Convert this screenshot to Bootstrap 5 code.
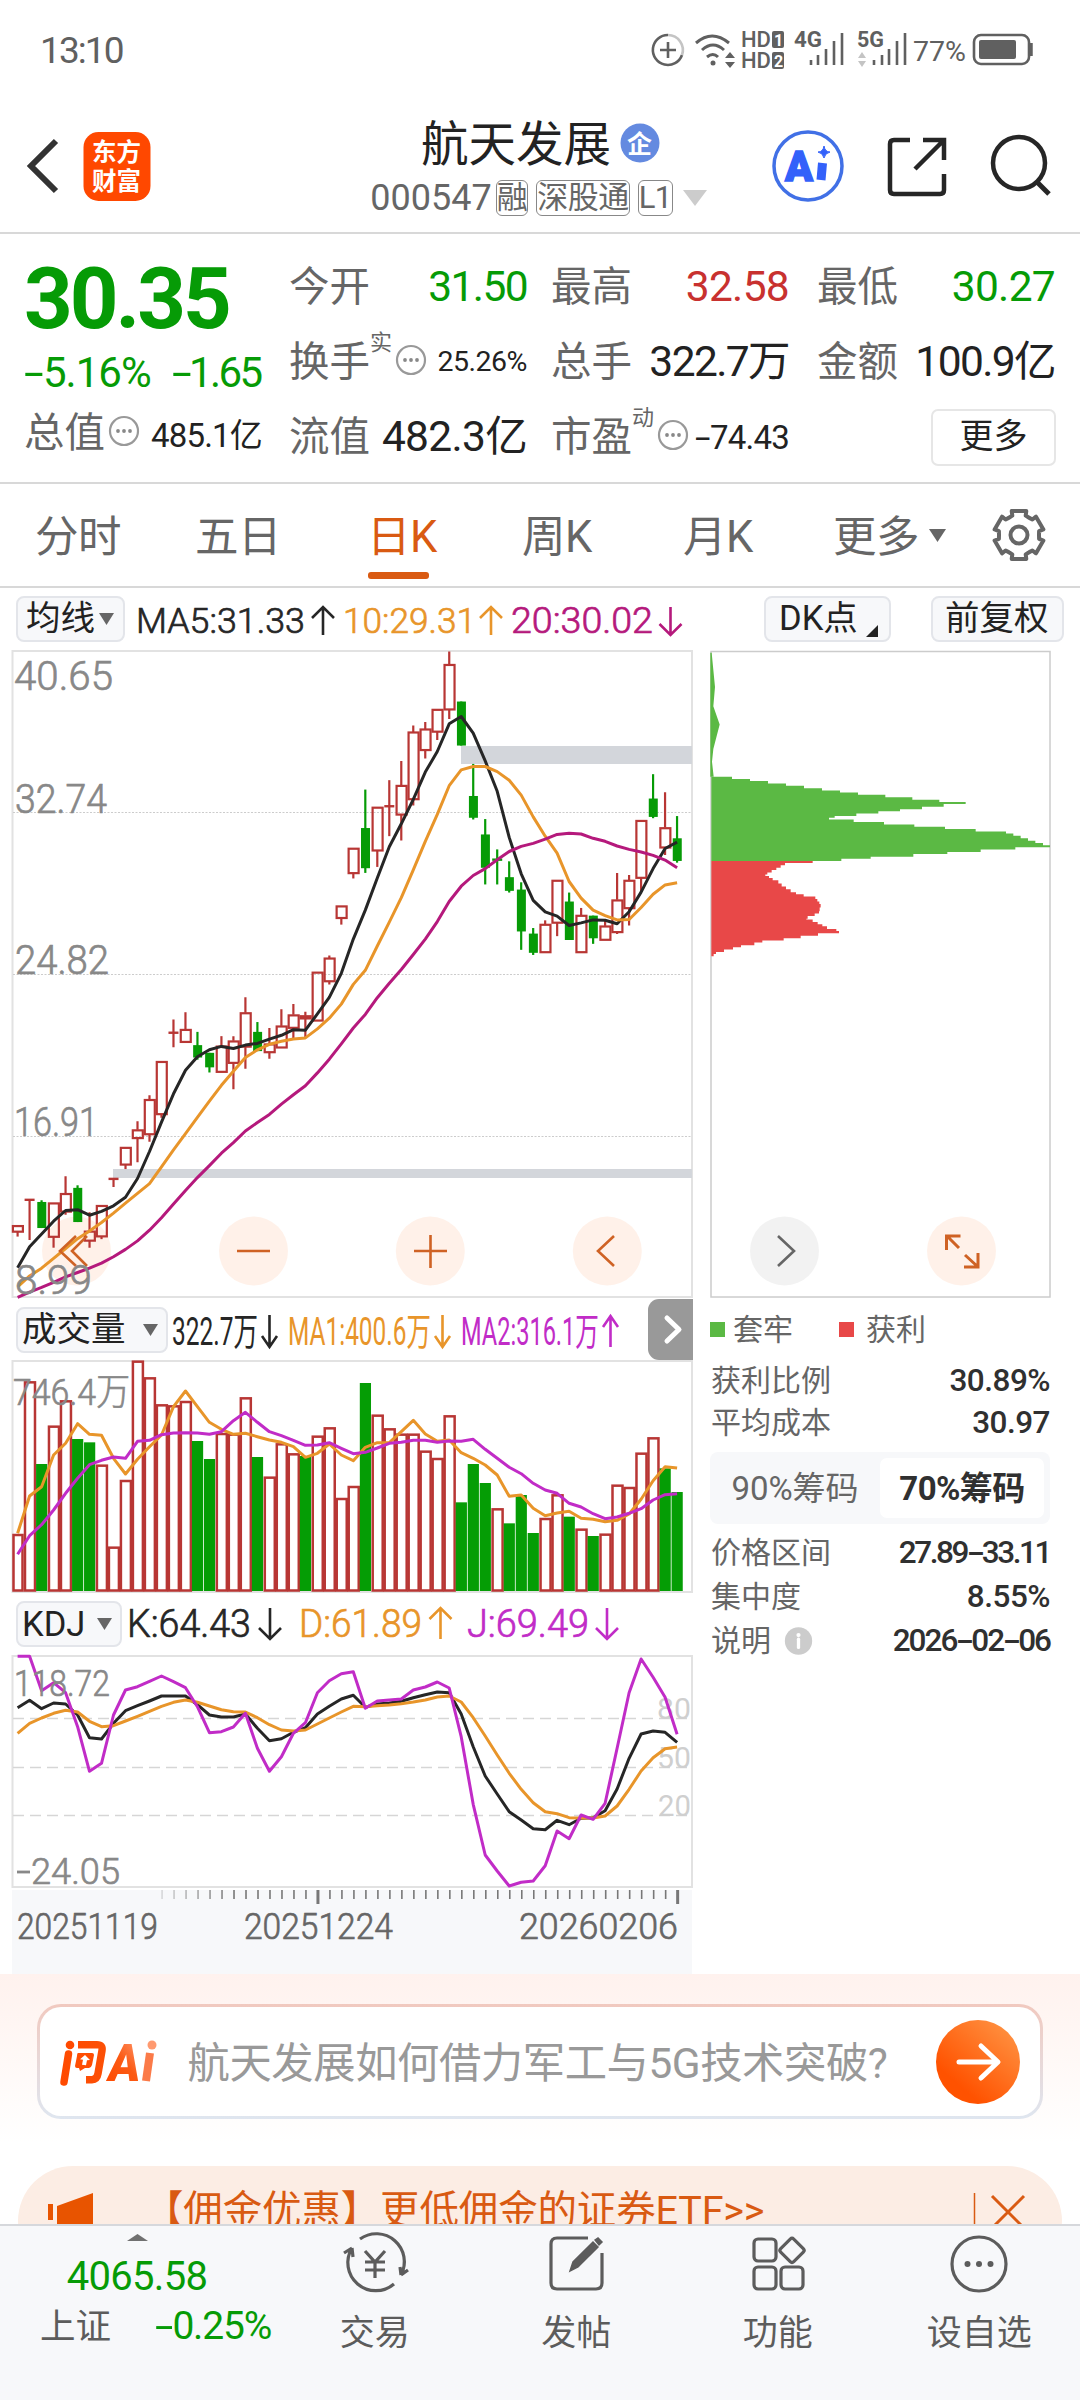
<!DOCTYPE html>
<html lang="zh-CN">
<head>
<meta charset="utf-8">
<meta name="viewport" content="width=device-width, initial-scale=1">
<title>航天发展 000547</title>
<link href="https://cdn.jsdelivr.net/npm/bootstrap@5.3.0/dist/css/bootstrap.min.css" rel="stylesheet">
<script src="https://cdn.jsdelivr.net/npm/bootstrap@5.3.0/dist/js/bootstrap.bundle.min.js"></script>
<style>
:root{--up:#c8312f;--down:#069b06;--ink:#222;--sub:#666;--brand:#d95a12;--panel:#f7f8fa;--rule:#d8d8d8}
html,body{width:1080px;height:2400px;overflow:hidden;margin:0;background:#fff}
body,svg text{font-family:Roboto,"Noto Sans CJK SC",sans-serif}
body{color:var(--ink);line-height:1}
svg{display:block;flex:none;overflow:visible}
.hy{display:inline-block;transform:scaleX(1.7);transform-origin:0 50%;margin-right:.2em}
.status{height:100px;padding:0 46px 0 40px;color:#606060}
.clock{font-size:37px;letter-spacing:-1.9px}
.topbar{height:134px;border-bottom:2px solid var(--rule)}
.title-col{width:338px}
.stock-name{font-size:47.5px;line-height:50px}
.code-line{font-size:36px;color:var(--sub);margin:10px 0 0 -5px}
.code-line .num{letter-spacing:0}
.tagbox{border:1.5px solid #888;border-radius:6px;height:36px;font-size:31px;line-height:33px;letter-spacing:-.5px}
.quote{height:250px;border-bottom:2px solid var(--rule);padding:0 23px 0 24px}
.price{font-size:85px;font-weight:700;letter-spacing:-3px;color:var(--down);height:80px;line-height:82px}
.delta{font-size:42px;letter-spacing:-1px;color:var(--down);height:62px;line-height:62px}
.delta .amt{letter-spacing:-2.6px;margin-left:21px}
.qcol{width:238px}
.qrow{height:75px;font-size:42.5px;white-space:nowrap}
.qrow .lb{font-size:40.5px;color:var(--sub)}
.qrow .v{letter-spacing:-.7px;margin-left:auto}
.qrow .tight{letter-spacing:-1.6px}
.qrow .v28{font-size:28.5px;letter-spacing:-.5px}
.qrow .v33{font-size:33px;letter-spacing:-.8px}
.sup{font-size:22px;color:var(--sub);align-self:flex-start;margin-top:7px}
.upshift{margin-top:-6px}
.morebtn{width:125px;height:57px;margin-right:-1px;border:2px solid #e6e6e6;border-radius:7px;font-size:34px;line-height:50px;text-align:center}
.tabs-k{height:104px;border-bottom:2px solid var(--rule);font-size:43.5px;color:var(--sub);padding-left:35px}
.tabs-k .tab{height:102px;line-height:107px;position:relative;letter-spacing:-.6px;white-space:nowrap}
.tabs-k .on{color:var(--brand)}
.tabs-k .on::after{content:"";position:absolute;left:1px;bottom:7px;width:61px;height:7px;border-radius:3px;background:var(--brand)}
.chipbtn{height:46px;border:2px solid #e3e5ea;border-radius:8px;background:var(--panel);font-size:34.5px;white-space:nowrap;padding-left:8px}
.ind{height:63px;padding:0 16px 2px;flex:none}
.mainrow{height:1323px}
.left{width:693px;padding-left:12px}
.right{width:340px;margin-left:17px}
.sidebtn{width:45px;height:61px;background:#999;border-radius:11px 0 0 11px}
.info{font-size:30px;color:var(--sub);height:44px;white-space:nowrap}
.info>span:first-child:not(.sq){padding-left:1px}
.info .val{color:#303030;font-weight:500;font-size:31.5px;letter-spacing:-.5px}
.info .v-range{letter-spacing:-2.4px}
.info .v-date{letter-spacing:-2px}
.sq{width:15px;height:15px}
.seg{height:72px;margin:7px 0;border-radius:8px;background:var(--panel);padding:6px;font-size:33px;color:var(--sub);letter-spacing:-.1px}
.seg .off{padding-right:6px}
.seg .act{width:164px;background:#fff;border-radius:7px;color:#303030;font-weight:700;letter-spacing:-.6px}
.axisbox{background:var(--panel);height:84px;width:680px;margin-top:2px}
.askband{height:192px;background:linear-gradient(#fff2ee,#fff 88%);padding:30px 37px 0}
.askcard{height:115px;border:3px solid transparent;border-radius:24px;background:linear-gradient(#fff,#fff) padding-box,linear-gradient(#f1c9bf,#dfe6f0) border-box;padding:0 20px}
.asktext{font-size:42.3px;color:#999;letter-spacing:-.4px;white-space:nowrap;padding-top:5px;margin-left:-5px}
.promo{height:110px;margin:0 18px;border-radius:55px;background:#fcede4;color:var(--brand);padding:0 36px 20px 30px;font-size:39.5px}
.promo .msg{white-space:nowrap;letter-spacing:-.15px;margin-left:50px}
.dock{height:176px;background:var(--panel);border-top:2px solid #d6d8dc;color:#5c5c5c}
.dock .item{width:201.5px;padding-top:6px;font-size:35px}
.dock .item span{margin-top:22px}
.idx{width:274px;color:var(--down);padding-top:8px}
.idx .pt{font-size:40px;letter-spacing:-.7px}
.idx .pc{font-size:39px;letter-spacing:-1.2px;margin:-2px 3px 0 0}
.idx .nm{font-size:35.5px;color:#5c5c5c}
</style>
</head>
<body>
<div class="status d-flex align-items-center justify-content-between">
  <span class="clock">13:10</span>
  <svg width="386" height="44" viewBox="648 28 386 44" fill="none" stroke="#606060" stroke-width="2.6">
    <path d="M668 35a15 15 0 1 0 14 20"/><path d="M668 35a15 15 0 0 1 14 20" stroke="#c4c4c4"/>
    <path d="M668 42v16M660 50h16"/>
    <path d="M696 43q16-14 33 0M702 50q11-10 22 0M707 57q6-5 11 0" stroke-width="3"/>
    <circle cx="713" cy="63" r="2.5" fill="#606060" stroke="none"/>
    <path d="M730 52l5 6h-10zM730 68l5-6h-10z" fill="#606060" stroke="none"/>
    <rect x="772" y="31" width="12" height="17" rx="2" fill="#606060" stroke="none"/>
    <rect x="772" y="52" width="12" height="17" rx="2" fill="#606060" stroke="none"/>
    <g fill="#606060" stroke="none" font-size="22">
      <text x="741" y="47" font-weight="500" textLength="30" lengthAdjust="spacingAndGlyphs">HD</text>
      <text x="741" y="68" font-weight="500" textLength="30" lengthAdjust="spacingAndGlyphs">HD</text>
      <text x="794" y="47" font-weight="700" textLength="28" lengthAdjust="spacingAndGlyphs">4G</text>
      <text x="857" y="47" font-weight="700" textLength="27" lengthAdjust="spacingAndGlyphs">5G</text>
      <text x="774" y="46" fill="#fff" font-size="16" font-weight="700">1</text>
      <text x="774" y="67" fill="#fff" font-size="16" font-weight="700">2</text>
      <text x="913" y="61" font-size="28" textLength="53" lengthAdjust="spacingAndGlyphs">77%</text>
    </g>
    <path d="M811 60v5M818 55v10M826 49v16M834 41v24M842 33v32M874 60v5M882 55v10M889 49v16M897 41v24M905 33v32"/>
    <path d="M862 52l4 6h-8zM862 67l4-6h-8z" fill="#c4c4c4" stroke="none"/>
    <rect x="974" y="35" width="55" height="29" rx="7"/><rect x="979" y="40" width="37" height="19" rx="2" fill="#606060" stroke="none"/>
    <path d="M1031 43v13" stroke-width="3.5"/>
  </svg>
</div>

<header class="topbar d-flex align-items-start">
  <svg width="371" height="132" viewBox="0 100 371 132">
    <path d="M56 141L31 166l25 25" fill="none" stroke="#333" stroke-width="6"/>
    <rect x="83.500" y="132" width="67" height="69" rx="15" fill="#ff4800"/>
    <g fill="#fff" font-weight="700" font-size="24.5"><text x="92" y="161">东方</text><text x="92" y="190">财富</text></g>
  </svg>
  <div class="title-col d-flex flex-column align-items-center">
    <div class="d-flex align-items-center mt-3 pt-1">
      <span class="stock-name">航天发展</span>
      <svg class="ms-2" width="40" height="42" viewBox="-1 0 40 42"><circle cx="20" cy="19" r="19.5" fill="#648ae0"/><text x="7" y="28.500" font-size="25" font-weight="700" fill="#fff">企</text></svg>
    </div>
    <div class="code-line d-flex align-items-center">
      <span class="num">000547</span><span class="tagbox ms-1 px-0">融</span><span class="tagbox ms-2">深股通</span><span class="tagbox ms-2 px-0">L1</span>
      <svg class="ms-2" width="24" height="16" viewBox="-2 0 24 16"><path d="M0 0h24l-12 16z" fill="#ccc"/></svg>
    </div>
  </div>
  <svg width="371" height="132" viewBox="709 100 371 132" fill="none" stroke="#262626" stroke-width="4.5">
    <circle cx="808" cy="166" r="34" stroke="#4170e6" stroke-width="3.500"/>
    <text x="785" y="181" font-size="43" font-weight="900" fill="#3361fa" stroke="#3361fa" stroke-width="1.500" textLength="28" lengthAdjust="spacingAndGlyphs">A</text>
    <path d="M822.500 163l-1.500 17" stroke="#3361fa" stroke-width="9"/><path d="M824 146q1 6 6 6-5 1-6 6-1-5-6-6 5 0 6-6z" fill="#3361fa" stroke="#3361fa" stroke-width="1"/>
    <path d="M910 140h-16q-4 0-4 4v46q0 4 4 4h46q4 0 4-4v-16M923 140h21v20M944 140l-29 29"/>
    <circle cx="1019" cy="163" r="26"/><path d="M1037 182l12 12" stroke-width="5"/>
  </svg>
</header>

<section class="quote d-flex">
  <div style="width:265px" class="pt-4">
    <div class="price">30.35</div>
    <div class="delta d-flex pt-1 mb-2"><span><span class="hy">-</span>5.16%</span><span class="amt"><span class="hy">-</span>1.65</span></div>
    <div class="qrow qcol d-flex align-items-center" style="height:51px"><span class="lb">总值</span><svg class="dots ms-1 upshift" width="30" height="30"></svg><span class="v v33 pt-1">485.1亿</span></div>
  </div>
  <div class="pt-3 me-4 qcol">
    <div class="qrow d-flex align-items-center"><span class="lb">今开</span><span class="v tight" style="color:var(--down)">31.50</span></div>
    <div class="qrow d-flex align-items-center"><span class="lb">换手</span><span class="sup">实</span><svg class="dots ms-1 upshift" width="30" height="30"></svg><span class="v v28">25.26%</span></div>
    <div class="qrow d-flex align-items-center"><span class="lb">流值</span><span class="v">482.3亿</span></div>
  </div>
  <div class="pt-3 me-4 qcol">
    <div class="qrow d-flex align-items-center"><span class="lb">最高</span><span class="v" style="color:var(--up)">32.58</span></div>
    <div class="qrow d-flex align-items-center"><span class="lb">总手</span><span class="v tight">322.7万</span></div>
    <div class="qrow d-flex align-items-center"><span class="lb">市盈</span><span class="sup">动</span><svg class="dots ms-1 upshift" width="30" height="30"></svg><span class="v v33"><span class="hy">-</span>74.43</span></div>
  </div>
  <div class="pt-3 qcol ms-1">
    <div class="qrow d-flex align-items-center"><span class="lb">最低</span><span class="v" style="color:var(--down)">30.27</span></div>
    <div class="qrow d-flex align-items-center"><span class="lb">金额</span><span class="v tight">100.9亿</span></div>
    <div class="qrow d-flex align-items-center justify-content-end"><span class="morebtn">更多</span></div>
  </div>
</section>

<nav class="tabs-k d-flex">
  <span class="tab" style="width:160px">分时</span><span class="tab" style="width:172px">五日</span><span class="tab on" style="width:155px">日K</span><span class="tab" style="width:161px">周K</span><span class="tab" style="width:150px">月K</span><span class="tab">更多</span>
  <svg width="135" height="102" viewBox="919 484 135 102" fill="none" stroke="#666" stroke-width="4"><path d="M929 529h17l-8.500 13z" fill="#666" stroke="none"/><path id="gear"/><circle cx="1019" cy="535" r="8.500"/></svg>
</nav>

<div class="ind d-flex align-items-center justify-content-between">
  <div class="d-flex align-items-center">
    <div class="chipbtn d-flex align-items-center" style="width:109px">均线<svg class="ms-1" width="15" height="12"><path d="M0 0h15l-7.500 12z" fill="#666"/></svg></div>
    <svg id="maText" width="570" height="46" viewBox="125 596 570 46"></svg>
  </div>
  <div class="d-flex">
    <div class="chipbtn d-flex align-items-center me-4" style="width:127px;padding-left:13px">DK点<svg class="ms-2 mt-4" width="12" height="12"><path d="M12 0v12H0z" fill="#222"/></svg></div>
    <div class="chipbtn d-flex align-items-center ms-3" style="width:133px;padding-left:12px">前复权</div>
  </div>
</div>

<div class="mainrow d-flex">
  <div class="left">
    <svg id="kChart" width="681" height="648" viewBox="12 651 681 648"></svg>
    <div class="d-flex align-items-center justify-content-between" style="height:61px">
      <div class="d-flex align-items-center">
        <div class="chipbtn d-flex align-items-center ms-1 pe-2 justify-content-between" style="width:152px;padding-left:4px">成交量<svg class="ms-1" width="15" height="12"><path d="M0 0h15l-7.500 12z" fill="#666"/></svg></div>
        <svg id="volText" width="460" height="46" viewBox="168 1306 460 46"></svg>
      </div>
      <div class="sidebtn"><svg width="45" height="61" fill="none" stroke="#fff" stroke-width="5" stroke-linecap="round" stroke-linejoin="round"><path d="M19 19l12 11.500L19 42"/></svg></div>
    </div>
    <svg id="vChart" width="681" height="233" viewBox="12 1360 681 233"></svg>
    <div class="d-flex align-items-center" style="height:62px">
      <div class="chipbtn d-flex align-items-center ms-1 pe-2 justify-content-between" style="width:106px;padding-left:4px">KDJ<svg width="15" height="12"><path d="M0 0h15l-7.500 12z" fill="#666"/></svg></div>
      <svg id="kdjText" width="520" height="46" viewBox="122 1602 520 46"></svg>
    </div>
    <svg id="jChart" width="681" height="233" viewBox="12 1655 681 233"></svg>
    <div class="axisbox"><svg id="axis" width="680" height="84" viewBox="12 1890 680 84"></svg></div>
  </div>
  <div class="right">
    <svg id="chip" width="341" height="648" viewBox="710 651 341 648"></svg>
    <div class="d-flex align-items-center info" style="height:61px"><span class="sq me-2 ms-0" style="background:#5bb944"></span><span style="width:106px">套牢</span><span class="sq me-2" style="background:#e84848"></span><span class="ps-1">获利</span></div>
    <div class="info d-flex align-items-center justify-content-between" style="height:41px"><span>获利比例</span><span class="val">30.89%</span></div>
    <div class="info d-flex align-items-center justify-content-between"><span>平均成本</span><span class="val">30.97</span></div>
    <div class="seg d-flex"><span class="off flex-fill d-flex align-items-center justify-content-center">90%筹码</span><span class="act d-flex align-items-center justify-content-center">70%筹码</span></div>
    <div class="info d-flex align-items-center justify-content-between"><span>价格区间</span><span class="val v-range">27.89<span class="hy">-</span>33.11</span></div>
    <div class="info d-flex align-items-center justify-content-between"><span>集中度</span><span class="val">8.55%</span></div>
    <div class="info d-flex align-items-center justify-content-between"><span class="d-flex align-items-center">说明<svg class="ms-2 ps-1" width="35" height="30" viewBox="-2 0 34 30"><circle cx="15" cy="15" r="15" fill="#ccc"/><circle cx="15" cy="8.500" r="2.300" fill="#fff"/><path d="M15 13v9" stroke="#fff" stroke-width="3.600" stroke-linecap="round"/></svg></span><span class="val v-date">2026<span class="hy">-</span>02<span class="hy">-</span>06</span></div>
  </div>
</div>

<section class="askband">
  <div class="askcard d-flex align-items-center justify-content-between">
    <svg width="100" height="50" viewBox="60 2036 100 50">
      <defs><linearGradient id="g1" gradientUnits="userSpaceOnUse" x1="60" x2="160" y1="0" y2="0"><stop offset="0" stop-color="#ff4a00"/><stop offset=".6" stop-color="#fb5208"/><stop offset="1" stop-color="#ff9a70"/></linearGradient>
      <linearGradient id="g3" gradientUnits="userSpaceOnUse" x1="-2" x2="34" y1="0" y2="-36"><stop offset="0" stop-color="#ff4a00"/><stop offset=".5" stop-color="#fb5a14"/><stop offset="1" stop-color="#ff9a70"/></linearGradient>
      <linearGradient id="g2" x1="1" y1="0" x2=".3" y2=".8"><stop offset="0" stop-color="#ff9a4a"/><stop offset="1" stop-color="#ff5200"/></linearGradient></defs>
      <g fill="none" stroke="url(#g1)" stroke-width="7.500"><path d="M68.500 2053L64 2081" stroke-linecap="round"/><path d="M78 2043.700h19q6 0 5 6l-4 23q-1 6-6 6h-6"/></g>
      <path d="M78 2052h14q2 0 2 2l-2 10q-1 3-3 3h-4l-5 3-1-3h-2q-2 0-2-2l2-10q0-3 1-3z" fill="#ff4d02"/>
      <path d="M85 2054l5 5-3 .3-1 5-4-.5 1-5-3-.6z" fill="#fff"/>
      <circle cx="70" cy="2044" r="4.300" fill="#ff4a00"/><circle cx="152" cy="2044" r="4.500" fill="#ff9a70"/>
      <text transform="translate(106 2080) skewX(-9)" font-size="52" font-weight="900" fill="url(#g3)" textLength="32" lengthAdjust="spacingAndGlyphs">A</text>
      <path d="M150 2052l-4 28" stroke="#fb7a48" stroke-width="8"/>
    </svg>
    <span class="asktext">航天发展如何借力军工与5G技术突破?</span>
    <svg width="84" height="84" class="ms-3"><circle cx="42" cy="42" r="42" fill="url(#g2)"/><path d="M23 42h38M45 26l17 16-17 16" fill="none" stroke="#fff" stroke-width="5" stroke-linecap="round" stroke-linejoin="round"/></svg>
  </div>
</section>
<div class="promo d-flex align-items-center">
  <svg width="46" height="40" viewBox="48 2191 46 40" fill="#e85400"><path d="M48 2204h5v16h-5zM57 2206l36-13v39H57z"/></svg>
  <span class="msg">【佣金优惠】更低佣金的证券ETF&gt;&gt;</span>
  <svg class="ms-auto" width="54" height="40" viewBox="972 2191 54 40" fill="none" stroke="#d95a12"><path d="M974.500 2193v38" stroke-width="1.500"/><path d="M992 2196l32 32M1024 2196l-32 32" stroke-width="3"/></svg>
</div>

<footer class="dock fixed-bottom d-flex">
  <div class="idx d-flex flex-column align-items-center">
    <svg width="21" height="7"><path d="M0 7L10.500 0 21 7z" fill="#707070"/></svg>
    <span class="pt mt-3">4065.58</span>
    <div class="d-flex align-items-center justify-content-between mt-2 pt-1 w-100 ps-4"><span class="nm ms-3">上证</span><span class="pc"><span class="hy">-</span>0.25%</span></div>
  </div>
  <div class="item d-flex flex-column align-items-center"><svg width="66" height="62" viewBox="342 2232 66 62" fill="none" stroke="#5c5c5c" stroke-width="3.200"><path d="M360 2239a28 28 0 0 1 41 36M401 2275l7-5M401 2275l-1-8M394 2284a28 28 0 0 1-42-36M352 2248l-8 5M352 2248l1 9"/><path d="M365 2251l10 11 10-11M375 2262v16M365 2262h20M365 2270h20"/></svg><span>交易</span></div>
  <div class="item d-flex flex-column align-items-center"><svg width="66" height="62" viewBox="544 2232 66 62" fill="none" stroke="#5c5c5c" stroke-width="3.200"><path d="M589 2238h-31q-6 0-6 6v39q0 6 6 6h39q6 0 6-6v-30"/><path d="M571 2271l3-9 20-20 5 5-20 20zM596 2240l3-2 4 4-3 3z" fill="#5c5c5c" stroke-width="1.500"/></svg><span>发帖</span></div>
  <div class="item d-flex flex-column align-items-center"><svg width="66" height="62" viewBox="745 2232 66 62" fill="none" stroke="#5c5c5c" stroke-width="3.200"><rect x="754" y="2239" width="22" height="22" rx="4"/><rect x="754" y="2267" width="22" height="22" rx="4"/><rect x="781" y="2267" width="22" height="22" rx="4"/><rect x="783" y="2241" width="18.500" height="18.500" rx="2.500" transform="rotate(45 792 2250)"/></svg><span>功能</span></div>
  <div class="item d-flex flex-column align-items-center"><svg width="66" height="62" viewBox="946 2232 66 62"><circle cx="979" cy="2264" r="27" fill="none" stroke="#5c5c5c" stroke-width="3.200"/><g fill="#5c5c5c"><circle cx="967.500" cy="2264" r="3"/><circle cx="979" cy="2264" r="3"/><circle cx="990.500" cy="2264" r="3"/></g></svg><span>设自选</span></div>
</footer>

<script>
const $=id=>document.getElementById(id), RED='#b83634', GRN='#069b06', BLK='#262626', ORG='#e8952a', MAG='#b5197c', PUR='#c12cc7';
const X=i=>17.6+11.99*i;
document.querySelectorAll('.dots').forEach(s=>s.innerHTML='<circle cx="15" cy="15" r="14" fill="none" stroke="#999" stroke-width="2.200"/><circle cx="9" cy="15" r="1.900" fill="#888"/><circle cx="15" cy="15" r="1.900" fill="#888"/><circle cx="21" cy="15" r="1.900" fill="#888"/>');

// six-tooth gear outline
let gp=[];for(let k=0;k<6;k++)for(const [d,r] of [[-29,20],[-19,20.500],[-17,25],[17,25],[19,20.500],[29,20]]){const a=(k*60-90+d)*Math.PI/180;gp.push((1019+r*Math.cos(a)).toFixed(1)+' '+(535+r*Math.sin(a)).toFixed(1));}
$('gear').setAttribute('d','M'+gp.join('L')+'z');$('gear').setAttribute('stroke-linejoin','round');

// label stretched between x and x2 (condensed once the natural width is known); soft = light face with a hairline
const T=(x,x2,y,s,size,col,soft)=>`<text class="fitted" data-x="${x-2}" data-y="${y}" data-w="${x2-x+4}" font-size="${size}" ${soft?`font-weight="300" stroke="${col}" stroke-width=".7"`:''} fill="${col}">${s}</text>`;
const A=(cx,y1,y2,w,up,col)=>{const t=up?y1:y2,d=up?11:-11;return `<path d="M${cx} ${y1}V${y2}M${cx-w} ${t+d}L${cx} ${t}L${cx+w} ${t+d}" fill="none" stroke="${col}" stroke-width="2.600"/>`;};
$('maText').innerHTML=T(138,303,632.5,'MA5:31.33',36,BLK,1)+A(323,607,635,11,1,BLK)+T(345,474,632.5,'10:29.31',36,ORG,1)+A(491,607,635,11,1,ORG)+T(513,651,632.5,'20:30.02',36,MAG,1)+A(670.5,607,635,11,0,MAG);
$('volText').innerHTML=T(174,256,1344,'322.7万',38,BLK)+A(269.5,1314,1346,7.5,0,BLK)+T(290,429,1344,'MA1:400.6万',38,ORG)+A(442.5,1314,1346,7.5,0,ORG)+T(463,597,1344,'MA2:316.1万',38,PUR)+A(610.5,1315,1346,7.5,1,PUR);
$('kdjText').innerHTML=T(129,249,1638,'K:64.43',38,BLK,1)+A(270,1609,1640,11,0,BLK)+T(301,420,1638,'D:61.89',38,ORG,1)+A(440.5,1609,1640,11,1,ORG)+T(469,587,1638,'J:69.49',38,PUR,1)+A(607,1609,1640,11,0,PUR);

const line=(a,f,col,w=3)=>`<polyline points="${a.map((v,i)=>X(i).toFixed(1)+','+f(v).toFixed(1)).join(' ')}" fill="none" stroke="${col}" stroke-width="${w}" stroke-linejoin="round"/>`;

// candles: [body top, body bottom, high, low, 1 = falling]
const C=[[1370,1385,1370,1396],[1310,1310,1310,1404],[1315,1376,1311,1376,1],[1317,1397,1317,1422],[1295,1338,1255,1345],[1282,1362,1276,1362,1],[1383,1406,1339,1422],[1323,1396,1323,1402],[1261,1261,1261,1280],[1187,1228,1187,1238],[1146,1166,1126,1222],[1075,1157,1065,1174],[986,1110,986,1118],[919,919,888,953],[911,941,871,941],[948,977,917,982,1],[966,1000,966,1012,1],[950,1011,927,1011],[938,990,927,1051],[872,952,836,1003],[917,962,894,962,1],[945,965,908,980],[903,954,864,954],[877,908,852,935],[879,886,870,930],[777,891,777,891],[744,799,738,806],[622,651,622,666],[487,546,487,558],[440,534,350,545,1],[391,493,391,531],[389,389,328,459],[340,409,283,469],[215,373,200,387],[208,258,192,277],[162,215,162,234],[57,163,27,185],[144,247,144,247,1],[365,416,290,420,1],[455,533,419,572,1],[514,514,490,572,1],[555,587,518,591,1],[584,682,567,725,1],[687,732,674,737,1],[665,731,656,731],[562,662,562,693],[612,702,591,702,1],[644,731,627,731],[645,698,645,711,1],[669,702,656,702],[608,684,545,688],[562,628,550,668],[422,557,422,590],[371,414,314,417,1],[439,486,356,503],[464,517,412,521,1]];
const ky=v=>640+v/2.34;
const M5=[1469,1420,1390,1360,1335,1333,1346,1337,1324,1304,1260,1197,1128,1062,1007,975,959,951,956,948,944,934,925,912,913,875,836,780,700,632,557,484,430,373,309,261,196,179,218,283,354,462,547,609,636,646,668,662,655,656,664,636,590,535,488,473];
const M10=[1514,1488,1470,1447,1424,1401,1383,1363,1341,1318,1295,1272,1233,1193,1155,1117,1079,1042,1009,977,959,946,939,934,931,910,885,852,806,773,716,660,603,538,471,408,341,304,296,296,308,328,363,414,459,499,565,604,632,645,655,654,626,595,573,568];
const M20=[1538,1526,1515,1503,1490,1480,1470,1458,1443,1426,1406,1381,1352,1320,1288,1258,1230,1201,1176,1149,1129,1110,1086,1064,1043,1013,981,945,908,876,837,803,771,736,700,659,612,576,551,535,514,495,483,476,466,455,452,454,464,471,482,490,496,504,515,533];
let k='<rect x="12.500" y="651" width="679.500" height="646" fill="none" stroke="#e2e2e2" stroke-width="2"/>';
for(const y of [812.5,974.5,1136.5])k+=`<path d="M13 ${y}H692" stroke="#ccc" stroke-width="1" stroke-dasharray="2 1.500"/>`;
k+='<path d="M461 746H692V764H461zM113 1169H692V1178H113z" fill="#d3d6db"/>';
const btn=(cx,bg)=>`<circle cx="${cx}" cy="1251" r="34.500" fill="${bg}" fill-opacity=".75"/>`;
k+=[76.5,253.5,430.3,607.3].map(c=>btn(c,'#ffece1')).join('');
C.forEach((c,i)=>{const x=X(i),[t,b,h,l]=c.map(ky),col=c[4]?GRN:RED;
 if(c[4]||b-t<1){k+=`<path d="M${x} ${h}V${l}" stroke="${col}" stroke-width="2.200"/>`;
  k+=b-t<1?`<path d="M${x-5} ${t}h10" stroke="${col}" stroke-width="2.400"/>`:`<rect x="${x-4.3}" y="${t}" width="9" height="${b-t}" fill="${col}"/>`;}
 else k+=`<path d="M${x} ${h}V${t}M${x} ${b}V${l}" stroke="${col}" stroke-width="2.200"/><rect x="${x-4.7}" y="${t+.6}" width="10" height="${Math.max(b-t-.8,1)}" fill="none" stroke="${col}" stroke-width="2.200"/>`;});
k+=line(M5,ky,BLK)+line(M10,ky,ORG)+line(M20,ky,MAG);
k+='<g fill="none" stroke="#cf6224" stroke-width="2.600"><path d="M76 1236l-16 15 16 15M87 1236l-15 15 15 15M237 1251h33M414 1251h33M430.500 1235v33M614 1236l-16 15 16 15"/></g>';
const G='#888';
k+=T(16,111,690,'40.65',40,G,1)+T(17,105,813,'32.74',40,G,1)+T(17,107,974,'24.82',40,G,1)+T(16,96,1136,'16.91',40,G,1)+T(17,90,1294,'8.99',40,G,1);
$('kChart').innerHTML=k;

// volume
const V=[735,277,-522,410,334,-447,-457,527,773,573,215,265,346,349,336,-453,-507,432,434,325,-501,563,463,493,-498,440,415,627,591,-279,377,418,434,434,485,507,379,-637,-522,-579,658,-700,-615,-729,687,616,-680,719,-738,734,587,594,491,445,-535,-606];
const V1=[730,618,590,495,460,401,433,436,505,552,508,470,435,350,303,350,397,418,433,430,440,450,457,470,502,490,462,495,512,472,458,458,425,391,432,454,450,488,505,525,555,619,615,655,677,669,664,685,688,695,691,672,628,572,530,534];
const V2=[793,737,704,660,610,565,524,511,501,505,454,451,434,429,428,429,433,425,392,367,397,425,437,451,466,465,458,475,491,487,474,460,457,451,451,457,453,454,448,478,505,532,551,580,600,610,640,651,671,686,681,670,656,630,614,611];
const vy=v=>1290+v/3;
let v='<rect x="12.500" y="1361" width="679.500" height="231" fill="none" stroke="#e2e2e2" stroke-width="2"/>';
V.forEach((a,i)=>{const x=X(i),y=vy(Math.abs(a));v+=a<0?`<rect x="${x-5.5}" y="${y}" width="11.200" height="${1591-y}" fill="#059d05"/>`:`<rect x="${i?x-4.6:13.5}" y="${y}" width="${i?10:9}" height="${1590.5-y}" fill="#fff" stroke="${RED}" stroke-width="2.500"/>`;});
v+=line(V1,vy,ORG)+line(V2,vy,PUR)+T(15,128,1405,'746.4万',37,G,1);
$('vChart').innerHTML=v;

// KDJ
const K=[353,331,356,339,342,375,443,447,400,362,347,333,318,318,318,344,375,381,381,372,415,452,446,427,413,372,349,327,316,352,342,339,334,323,314,306,308,372,470,558,612,665,690,716,719,691,704,685,683,662,597,505,432,423,427,457];
const D=[430,400,384,370,361,366,394,410,407,393,379,364,349,337,330,337,348,359,365,366,383,404,420,423,420,402,384,366,349,350,347,345,341,336,330,321,318,336,383,438,495,550,598,638,665,671,683,684,684,678,648,598,543,503,476,471];
const J=[199,199,302,278,308,410,544,520,375,300,290,274,258,275,293,350,428,425,411,370,475,544,500,430,398,308,272,251,245,355,333,330,327,300,291,276,294,440,643,795,843,888,877,873,827,723,746,675,688,640,475,308,207,262,322,433];
const jy=a=>1590+a/3;
let j='<rect x="12.500" y="1656" width="679.500" height="231" fill="none" stroke="#e2e2e2" stroke-width="2"/>';
for(const y of [1718.5,1767.5,1815.5])j+=`<path d="M13 ${y}H692" stroke="#d6d6d6" stroke-width="1.500" stroke-dasharray="11 6"/>`;
const L='#cfcfcf';
j+=T(659,689,1719,'80',29,L)+T(659,689,1767.5,'50',29,L)+T(660,689,1816,'20',29,L);
j+=line(K,jy,BLK)+line(D,jy,ORG)+line(J,jy,PUR)+T(16,108,1696,'118.72',37,G,1)+T(33,118,1884,'24.05',37,G,1)+'<path d="M17 1872h13" stroke="#888" stroke-width="2.800"/>';
$('jChart').innerHTML=j;

// date axis
let x='';for(let i=12;i<56;i++){const b=i==25||i==55;x+=`<path d="M${X(i)+.6} 1890v${b?14:9}" stroke="#777" stroke-opacity="${Math.min(1,(i-10)/8)}" stroke-width="${b?3:1.6}"/>`;}
x+=T(19,156,1939,'20251119',37,'#666',1)+T(246,391,1939,'20251224',37,'#666',1)+T(521,676,1939,'20260206',37,'#666',1);
$('axis').innerHTML=x;

// cost distribution, stepped rows [y, extent]
const step=(a,end)=>{let d=`M34 ${a[0][0]}`;a.forEach((p,i)=>{d+=`H${p[1]}V${i+1<a.length?a[i+1][0]:end}`;});return d+'H34z';};
const g=[[320,96],[325,150],[330,204],[336,258],[341,312],[347,366],[352,420],[357,474],[362,556],[368,637],[374,718],[379,797],[384,731],[390,666],[396,600],[401,535],[406,469],[412,404],[416,387],[420,461],[426,552],[432,643],[437,735],[442,827],[448,918],[453,940],[458,962],[464,984],[470,1006],[475,1029],[480,1050],[485,946],[490,842],[496,742],[501,640],[507,512],[512,424]];
const r=[[517,338],[522,255],[527,242],[533,229],[538,215],[544,202],[549,196],[552,207],[557,218],[562,235],[570,245],[577,258],[583,272],[590,288],[595,311],[600,346],[606,352],[612,358],[618,362],[626,359],[635,357],[640,344],[646,323],[652,319],[654,338],[660,353],[665,367],[670,381],[676,409],[681,417],[686,354],[692,302],[698,251],[703,187],[708,163],[714,123],[719,99],[724,72],[730,48],[735,41]];
$('chip').innerHTML=`<rect x="711" y="651.500" width="339" height="645.500" fill="none" stroke="#ccc" stroke-width="1.500"/>
<g transform="translate(700 640) scale(.33333 .42735)"><path d="M31 30H35L45 110L40 155L59 198L40 255L36 285L41 320H31z" fill="#5bb944"/><path d="${step(g,517)}" fill="#5bb944"/><path d="${step(r,740)}" fill="#e84848"/></g>
${btn(784.5,'#eeeeee')}${btn(961.5,'#ffece1')}
<path d="M778 1236l16 15-16 15" fill="none" stroke="#666" stroke-width="2.600"/>
<g fill="none" stroke="#cf6224" stroke-width="3"><path d="M946.500 1250v-14h14M947 1236l12 12M964 1267h14v-14M977 1266l-12-11"/></g>`;

document.querySelectorAll('.fitted').forEach(t=>{const d=t.dataset;t.setAttribute('transform',`translate(${d.x} ${d.y}) scale(${(d.w/t.getComputedTextLength()).toFixed(4)} 1)`);});
</script>
</body>
</html>
